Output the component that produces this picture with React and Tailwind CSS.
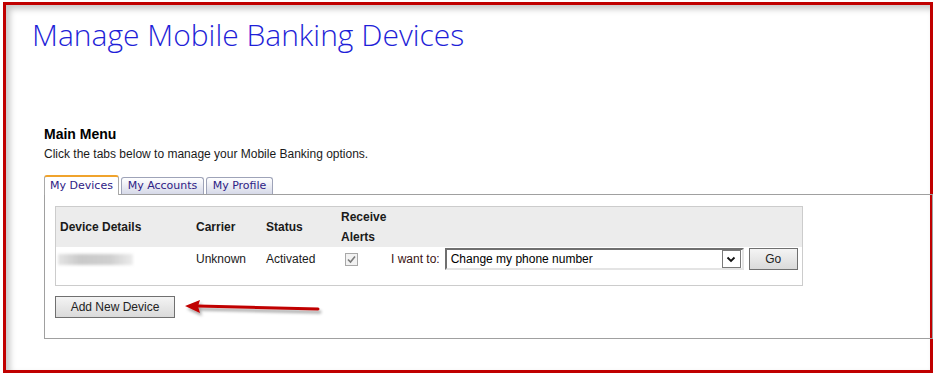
export default function App() {
  return (
    <div className="w-[934px] h-[374px] bg-white pt-[2px] pl-[3px] font-['Liberation_Sans',Arial,sans-serif] text-[12px] text-[#1a1a1a]">
      {/* red highlight frame */}
      <div className="w-[930px] h-[371px] border-[3px] border-[#c00000] shadow-[inset_4px_4px_6px_rgba(0,0,0,0.22)]">
        <h1 className="mt-[10px] ml-[26px] h-[40px] font-['Open_Sans',sans-serif] font-light text-[30px] leading-[40px] text-[#1f1fd8]">
          Manage Mobile Banking Devices
        </h1>

        <div className="ml-[38px] mt-[71px] font-bold text-[14px] leading-[16px] text-black">
          Main Menu
        </div>
        <p className="ml-[38px] mt-[5px] leading-[14px]">
          Click the tabs below to manage your Mobile Banking options.
        </p>

        {/* tabs */}
        <div className="ml-[38px] mt-[14px] h-[19px] flex items-end gap-[2px] font-['DejaVu_Sans',Verdana,sans-serif] text-[11px] text-[#2e2185]">
          <div className="relative z-10 -mb-px h-[20px] w-[75px] flex items-center justify-center bg-white border-x border-[#a9a9a9] border-t-2 border-t-[#f0a32c] rounded-t-[3px]">
            My Devices
          </div>
          <div className="h-[17px] w-[83px] flex items-center justify-center border border-b-0 border-[#9ea3b8] rounded-t-[3px] bg-[linear-gradient(#ffffff,#d6d9e8)]">
            My Accounts
          </div>
          <div className="h-[17px] w-[67px] flex items-center justify-center border border-b-0 border-[#9ea3b8] rounded-t-[3px] bg-[linear-gradient(#ffffff,#d6d9e8)]">
            My Profile
          </div>
        </div>

        {/* tab panel */}
        <div className="ml-[38px] w-[889px] h-[145px] border border-[#a0a0a0] pt-[11px] pl-[10px]">
          <div className="w-[748px] border border-[#cccccc]">
            <div className="flex items-center h-[40px] bg-[#ececec] font-bold">
              <div className="w-[135px] pl-[4px]">Device Details</div>
              <div className="w-[70px] pl-[5px]">Carrier</div>
              <div className="w-[75px] pl-[5px]">Status</div>
              <div className="w-[50px] pl-[5px] leading-[20px]">
                Receive
                <br />
                Alerts
              </div>
            </div>
            <div className="flex items-center h-[22px] mt-[1px] mb-[15px]">
              <div className="w-[135px] pl-[2px]">
                <div className="w-[75px] h-[11px] bg-[linear-gradient(90deg,#e4e4e4,#c9c9c9_30%,#cfcfcf_70%,#ececec)] blur-[1.5px]" />
              </div>
              <div className="w-[70px] pl-[5px]">Unknown</div>
              <div className="w-[75px] pl-[5px]">Activated</div>
              <div className="w-[50px] pl-[9px]">
                <div className="w-[13px] h-[13px] border border-[#a8a8a8] bg-[#f2f2f2] flex items-center justify-center">
                  <svg width="9" height="9" viewBox="0 0 9 9">
                    <path d="M1 4.5 L3.5 7 L8 1.5" fill="none" stroke="#7a7a7a" strokeWidth="1.6" />
                  </svg>
                </div>
              </div>
              <div className="pl-[5px] text-[#3a1212]">I want to:</div>
              <div className="ml-[5px] w-[299px] h-[22px] border-2 border-t-[#6f6f6f] border-l-[#6f6f6f] border-r-[#e4e4e4] border-b-[#e4e4e4] bg-white flex items-center justify-between pl-[4px] pr-[1px]">
                <span className="text-black">Change my phone number</span>
                <div className="w-[19px] h-[18px] border border-[#7a7a7a] bg-white flex items-center justify-center">
                  <svg width="10" height="7" viewBox="0 0 10 7">
                    <path d="M1.5 1.5 L5 5 L8.5 1.5" fill="none" stroke="#111" strokeWidth="1.8" />
                  </svg>
                </div>
              </div>
              <button className="ml-[5px] w-[49px] h-[22px] border border-[#707070] bg-[linear-gradient(#f4f4f4,#dadada)] text-[12px] text-[#222]">
                Go
              </button>
            </div>
          </div>

          <div className="mt-[10px] flex items-start">
            <button className="w-[120px] h-[22px] border border-[#707070] bg-[linear-gradient(#f4f4f4,#dadada)] text-[12px] text-[#222]">
              Add New Device
            </button>
            <svg width="150" height="24" viewBox="0 0 150 24" className="ml-[8px] mt-[1px]">
              <defs>
                <filter id="arrowShadow" x="-10%" y="-50%" width="120%" height="200%">
                  <feDropShadow dx="2" dy="3" stdDeviation="1.6" floodColor="#000" floodOpacity="0.35" />
                </filter>
              </defs>
              <g filter="url(#arrowShadow)">
                <path d="M15 9 L135 12" stroke="#c00000" strokeWidth="3" strokeLinecap="round" />
                <path d="M2 9 L17 3 L15 9.2 L17 16 Z" fill="#c00000" />
              </g>
            </svg>
          </div>
        </div>
      </div>
    </div>
  );
}
